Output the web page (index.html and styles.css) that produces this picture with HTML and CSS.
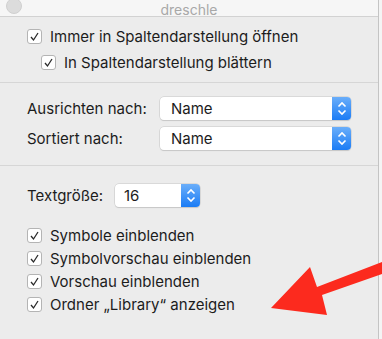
FILE: index.html
```html
<!DOCTYPE html>
<html>
  <head>
    <title>dreschle</title>
    <link rel="stylesheet" href="styles.css">
  </head>
  <body>
    <div class="window">
      <div class="titlebar">
        <span class="close"></span>
        <span class="title">dreschle</span>
      </div>

      <!-- Spaltendarstellung -->
      <div class="section first">
        <div class="row">
          <span class="check"><svg width="13" height="13" viewBox="0 0 13 13"><path d="M3 7 L5.5 10 L10 3" fill="none" stroke="#2a2a2a" stroke-width="1.3"/></svg></span>
          <span class="label">Immer in Spaltendarstellung öffnen</span>
        </div>
        <div class="row indent">
          <span class="check"><svg width="13" height="13" viewBox="0 0 13 13"><path d="M3 7 L5.5 10 L10 3" fill="none" stroke="#2a2a2a" stroke-width="1.3"/></svg></span>
          <span class="label">In Spaltendarstellung blättern</span>
        </div>
      </div>

      <!-- Anordnung -->
      <div class="section second">
        <div class="row popup-row">
          <span class="label wide">Ausrichten nach:</span>
          <div class="popup long">
            <span class="value">Name</span>
            <span class="stepper"><svg width="10" height="15" viewBox="0 0 10 15"><path d="M1.5 5.5 L5 2 L8.5 5.5 M1.5 9.5 L5 13 L8.5 9.5" fill="none" stroke="#fff" stroke-width="1.6"/></svg></span>
          </div>
        </div>
        <div class="row popup-row">
          <span class="label wide">Sortiert nach:</span>
          <div class="popup long">
            <span class="value">Name</span>
            <span class="stepper"><svg width="10" height="15" viewBox="0 0 10 15"><path d="M1.5 5.5 L5 2 L8.5 5.5 M1.5 9.5 L5 13 L8.5 9.5" fill="none" stroke="#fff" stroke-width="1.6"/></svg></span>
          </div>
        </div>
      </div>

      <!-- Text und Symbole -->
      <div class="section third">
        <div class="row popup-row">
          <span class="label narrow">Textgröße:</span>
          <div class="popup short">
            <span class="value">16</span>
            <span class="stepper"><svg width="10" height="15" viewBox="0 0 10 15"><path d="M1.5 5.5 L5 2 L8.5 5.5 M1.5 9.5 L5 13 L8.5 9.5" fill="none" stroke="#fff" stroke-width="1.6"/></svg></span>
          </div>
        </div>
        <div class="checks">
          <div class="row"><span class="check"><svg width="13" height="13" viewBox="0 0 13 13"><path d="M3 7 L5.5 10 L10 3" fill="none" stroke="#2a2a2a" stroke-width="1.3"/></svg></span><span class="label">Symbole einblenden</span></div>
          <div class="row"><span class="check"><svg width="13" height="13" viewBox="0 0 13 13"><path d="M3 7 L5.5 10 L10 3" fill="none" stroke="#2a2a2a" stroke-width="1.3"/></svg></span><span class="label">Symbolvorschau einblenden</span></div>
          <div class="row"><span class="check"><svg width="13" height="13" viewBox="0 0 13 13"><path d="M3 7 L5.5 10 L10 3" fill="none" stroke="#2a2a2a" stroke-width="1.3"/></svg></span><span class="label">Vorschau einblenden</span></div>
          <div class="row"><span class="check"><svg width="13" height="13" viewBox="0 0 13 13"><path d="M3 7 L5.5 10 L10 3" fill="none" stroke="#2a2a2a" stroke-width="1.3"/></svg></span><span class="label">Ordner „Library“ anzeigen</span></div>
        </div>
      </div>
    </div>
    <div class="edge"></div>

    <!-- annotation arrow -->
    <svg class="arrow" width="120" height="80" viewBox="262 255 120 80">
      <polygon points="382,262 382,274 322,295 327,315 271,308 310,267 317,287" fill="#fc2a1e"/>
    </svg>
  </body>
</html>
```

FILE: styles.css
```css
html, body {
  margin: 0;
  padding: 0;
}
body {
  width: 382px;
  height: 339px;
  overflow: hidden;
  display: flex;
  background-color: #ffffff;
  font-family: Inter, "Liberation Sans", Arial, sans-serif;
  font-size: 15px;
  color: #1c1c1c;
  position: relative;
}
.window {
  width: 378px;
  height: 339px;
  background-color: #ececec;
  border-right: 1px solid #c4c4c4;
}
.edge {
  width: 3px;
  background-color: #f4f4f4;
}
.titlebar {
  height: 16px;
  background-color: #f6f6f6;
  border-bottom: 1px solid #d2d2d2;
  position: relative;
  text-align: center;
  overflow: hidden;
}
.close {
  position: absolute;
  left: 6px;
  top: -2px;
  width: 14px;
  height: 14px;
  border-radius: 50%;
  background-color: #dcdcdc;
  border: 1px solid #d0d0d0;
}
.title {
  display: inline-block;
  color: #a8a8a8;
  font-size: 14px;
  line-height: 15px;
}
.section {
  padding-left: 27px;
  border-bottom: 1px solid #d6d6d6;
}
.first {
  padding-top: 8px;
  height: 57px;
  display: flex;
  flex-direction: column;
  gap: 4px;
}
.second {
  padding-top: 14px;
  height: 68px;
  display: flex;
  flex-direction: column;
  gap: 7px;
}
.third {
  border-bottom: none;
  padding-top: 18px;
}
.row {
  display: flex;
  align-items: center;
  height: 22px;
}
.popup-row {
  height: 23px;
}
.indent {
  padding-left: 14px;
}
.check {
  width: 13px;
  height: 13px;
  border: 1px solid #b4b4b4;
  border-radius: 3px;
  background-color: #ffffff;
  margin-right: 8px;
  flex: none;
  display: flex;
}
.label.wide {
  width: 133px;
}
.label.narrow {
  width: 88px;
}
.popup {
  height: 23px;
  display: flex;
  background-color: #ffffff;
  border-radius: 4px;
  box-shadow: 0 0 0 0.5px #c6c6c6, 0 1px 1px rgba(0, 0, 0, 0.15);
  overflow: hidden;
}
.popup.long {
  width: 191px;
}
.popup.short {
  width: 85px;
}
.value {
  flex: 1;
  padding-left: 11px;
  line-height: 23px;
}
.short .value {
  padding-left: 9px;
}
.stepper {
  width: 19px;
  display: flex;
  align-items: center;
  justify-content: center;
  background: linear-gradient(#6aaefa, #1b7cf5);
}
.checks {
  margin-top: 17px;
  display: flex;
  flex-direction: column;
  gap: 1px;
}
.arrow {
  position: absolute;
  left: 262px;
  top: 255px;
}
```
